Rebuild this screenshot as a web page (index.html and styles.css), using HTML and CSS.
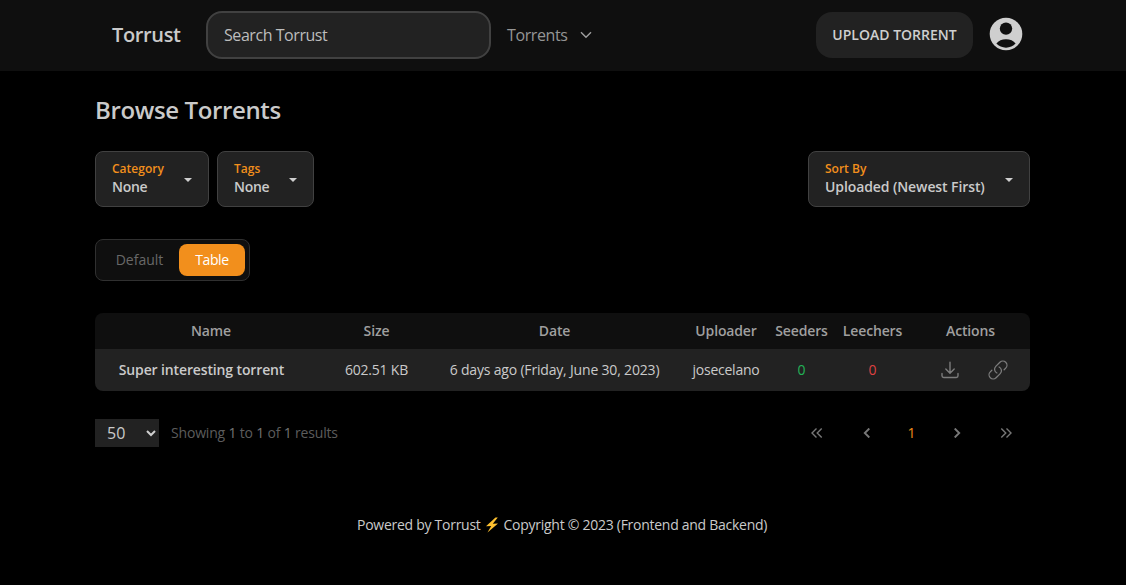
FILE: index.html
```html
<!DOCTYPE html>
<html lang="en">
<head>
<meta charset="utf-8">
<title>Torrust</title>
<link rel="stylesheet" href="styles.css">
</head>
<body>
<header class="navbar">
  <a class="brand"><span class="t-brand">Torrust</span></a>
  <div class="search"><span class="t-search">Search Torrust</span></div>
  <nav class="nav-menu">
    <span class="t-nav">Torrents</span>
    <svg class="chevron" viewBox="0 0 12 8" width="12" height="8"><path d="M1 1.2 6 6.2 11 1.2"/></svg>
  </nav>
  <button class="upload"><span class="t-upload">UPLOAD TORRENT</span></button>
  <svg class="avatar" viewBox="0 0 34 34" width="34" height="34">
    <circle class="avatar-disc" cx="17" cy="17" r="16.3"/>
    <circle class="avatar-cut" cx="17" cy="11.6" r="6.2"/>
    <path class="avatar-cut" d="M7.4 26.6C9.400 23.700 13 22.300 17 22.300S24.600 23.700 26.600 26.600C24.200 29.300 20.800 30.700 17 30.700S9.800 29.300 7.400 26.600Z"/>
  </svg>
</header>
<main class="content">
  <h1 class="title"><span class="t-title">Browse Torrents</span></h1>
  <div class="filters">
    <div class="filter category">
      <div><div class="label"><span class="t-cat">Category</span></div><div class="value"><span class="t-none">None</span></div></div>
      <i class="caret"></i>
    </div>
    <div class="filter tags">
      <div><div class="label"><span class="t-tags">Tags</span></div><div class="value"><span class="t-none">None</span></div></div>
      <i class="caret"></i>
    </div>
    <div class="filter sort">
      <div><div class="label"><span class="t-sort">Sort By</span></div><div class="value"><span class="t-order">Uploaded (Newest First)</span></div></div>
      <i class="caret"></i>
    </div>
  </div>
  <div class="tabs">
    <span class="tab"><span class="t-default">Default</span></span>
    <span class="tab active"><span class="t-table">Table</span></span>
  </div>
  <table class="torrents">
    <colgroup><col class="c-name"><col class="c-size"><col class="c-date"><col class="c-user"><col class="c-seed"><col class="c-leech"><col class="c-act"></colgroup>
    <thead><tr>
      <th><span class="t-head">Name</span></th><th><span class="t-head">Size</span></th><th><span class="t-head">Date</span></th><th><span class="t-head">Uploader</span></th><th><span class="t-head">Seeders</span></th><th><span class="t-head">Leechers</span></th><th><span class="t-head">Actions</span></th>
    </tr></thead>
    <tbody><tr>
      <td class="name"><span class="t-name">Super interesting torrent</span></td>
      <td><span class="t-size">602.51 KB</span></td>
      <td><span class="t-date">6 days ago (Friday, June 30, 2023)</span></td>
      <td><span class="t-user">josecelano</span></td>
      <td class="seed">0</td>
      <td class="leech">0</td>
      <td><div class="actions">
        <svg viewBox="0 0 18 18" width="18" height="18"><path d="M9 1.200V12M4.800 8 9 12.200 13.200 8M1 12.500V14.800Q1 16.500 2.700 16.500H15.300Q17 16.500 17 14.800V12.500"/></svg>
        <svg viewBox="0 0 24 24" width="22" height="22"><path d="M13.190 8.688a4.500 4.500 0 0 1 1.242 7.244l-4.500 4.500a4.500 4.500 0 0 1-6.364-6.364l1.757-1.757m13.350-.622 1.757-1.757a4.500 4.500 0 0 0-6.364-6.364l-4.500 4.500a4.500 4.500 0 0 0 1.242 7.244"/></svg>
      </div></td>
    </tr></tbody>
  </table>
  <div class="footer-row">
    <div class="page-size"><span class="t-fifty">50</span><svg viewBox="0 0 10 7" width="10" height="7"><path d="M1 1 5 5 9 1"/></svg></div>
    <div class="results"><span class="t-results">Showing <b>1</b> to <b>1</b> of <b>1</b> results</span></div>
    <div class="pager">
      <svg class="thin" viewBox="0 0 12 10" width="12" height="10"><path d="M5.500.5 1 5 5.500 9.500M10.700.5 6.200 5 10.700 9.500"/></svg>
      <svg viewBox="0 0 12 10" width="12" height="10"><path d="M8.300.5 3.800 5 8.300 9.500"/></svg>
      <span class="current">1</span>
      <svg viewBox="0 0 12 10" width="12" height="10"><path d="M3.700.5 8.200 5 3.700 9.500"/></svg>
      <svg class="thin" viewBox="0 0 12 10" width="12" height="10"><path d="M1.300.5 5.800 5 1.300 9.500M6.500.5 11 5 6.500 9.500"/></svg>
    </div>
  </div>
</main>
<footer class="credits">
  <span class="t-powered">Powered by Torrust</span>
  <svg class="bolt" viewBox="0 0 14 16" width="14" height="16"><path d="M10.500.5 1 9.200 6.200 9 2.500 15.500 13 6.500 7.800 6.700 12.800.5Z"/></svg>
  <span class="t-copy">Copyright © 2023 (Frontend and Backend)</span>
</footer>
</body>
</html>
```
FILE: styles.css
```css
* { box-sizing: border-box; }
body {
  margin: 0;
  min-height: 585px;
  background: #000;
  color: #cacaca;
  font: 14px/20px "Open Sans", "Noto Sans", sans-serif;
}
span { white-space: nowrap; }
svg { display: block; fill: none; flex: none; }

.t-brand { letter-spacing: -0.35px; }
.t-search { letter-spacing: -0.44px; }
.t-nav { letter-spacing: -0.4px; }
.t-title { letter-spacing: -0.37px; }
.t-none { letter-spacing: -0.3px; }
.t-order { letter-spacing: -0.1px; }
.t-table { letter-spacing: -0.4px; }
.t-head { letter-spacing: -0.15px; }
.t-name { letter-spacing: -0.13px; }
.t-size { letter-spacing: -0.2px; }
.t-date { letter-spacing: -0.18px; }
.t-user { letter-spacing: -0.25px; }
.t-results { letter-spacing: -0.18px; }
.t-powered { letter-spacing: -0.27px; }
.t-copy { letter-spacing: -0.27px; }

.navbar {
  display: flex;
  align-items: center;
  height: 71px;
  padding: 0 103px 2px 112px;
  background: #0f0f0f;
}
.brand { width: 94px; font-size: 20px; font-weight: 600; }
.search {
  display: flex;
  align-items: center;
  width: 285px;
  height: 48px;
  padding-left: 16px;
  border: 2px solid #414141;
  border-radius: 16px;
  background: #222;
  color: #bdbdbd;
  font-size: 16px;
}
.nav-menu {
  display: flex;
  align-items: center;
  justify-content: space-between;
  width: 85px;
  margin-left: 16px;
  color: #959595;
  font-size: 16px;
}
.chevron path { stroke: #9f9f9f; stroke-width: 1.4; }
.upload {
  width: 157px;
  height: 46px;
  margin: 0 16px 0 auto;
  padding: 0;
  border: 0;
  border-radius: 16px;
  background: #222;
  color: #cfcfcf;
  font: 600 14px/20px "Open Sans", sans-serif;
}
.avatar { margin-bottom: 2px; }
.avatar-disc { fill: #cfcfcf; }
.avatar-cut { fill: #0f0f0f; }

.content { width: 935px; margin-left: 95px; }
.title { margin: 0; padding-top: 23px; font-size: 24px; line-height: 32px; font-weight: 600; }
.filters { display: flex; gap: 8px; margin-top: 25px; }
.filter {
  display: flex;
  align-items: center;
  justify-content: space-between;
  height: 56px;
  padding: 0 16px;
  border: 1px solid #414141;
  border-radius: 8px;
  background: #222;
  font-weight: 600;
}
.category { width: 114px; }
.tags { width: 97px; }
.sort { width: 222px; margin-left: auto; }
.label { color: #f28f1c; font-size: 12px; line-height: 16px; font-weight: 600; }
.value { line-height: 20px; }
.caret {
  border: 4px solid transparent;
  border-top-color: #cfcfcf;
  border-bottom: 0;
  margin-top: 1px;
}
.tabs {
  display: flex;
  width: 155px;
  height: 42px;
  margin-top: 32px;
  padding: 4px;
  border: 1px solid #303030;
  border-radius: 8px;
  background: #0f0f0f;
}
.tab { width: 79px; line-height: 32px; text-align: center; color: #686868; }
.tab.active { width: 66px; border-radius: 8px; background: #f28f1c; color: #fff; }

.torrents {
  width: 935px;
  margin-top: 32px;
  border-collapse: collapse;
  table-layout: fixed;
  border-radius: 8px;
  overflow: hidden;
}
.c-name { width: 232px; }
.c-size { width: 99px; }
.c-date { width: 257px; }
.c-user { width: 86px; }
.c-seed { width: 65px; }
.c-leech { width: 77px; }
.c-act { width: 119px; }
th, td { padding: 0; text-align: center; }
th { height: 36px; background: #0f0f0f; color: #9f9f9f; font-weight: 600; }
td { height: 42px; background: #222; }
.name { padding-right: 19px; font-weight: 600; }
.seed { color: #22b357; }
.leech { color: #df4141; }
.actions { display: flex; align-items: center; justify-content: space-between; padding: 0 21px 0 30px; }
.actions path { stroke: #7c7c7c; stroke-width: 1.4; stroke-linecap: round; stroke-linejoin: round; }

.footer-row { display: flex; align-items: center; height: 28px; margin-top: 28px; }
.page-size {
  display: flex;
  align-items: center;
  justify-content: space-between;
  width: 64px;
  height: 28px;
  padding: 0 3px 0 12px;
  background: #222;
  font-size: 16px;
}
.page-size path { stroke: #cfcfcf; stroke-width: 2; }
.results { margin-left: 12px; color: #5c5c5c; }
.results b { color: #747474; font-weight: 400; }
.pager { display: flex; align-items: center; gap: 37.5px; margin: 0 18px 0 auto; }
.pager path { stroke: #777; stroke-width: 1.9; }
.pager .thin path { stroke-width: 1.4; }
.current { width: 8px; margin: 0 -2.5px; color: #f28f1c; }

.credits { display: flex; align-items: center; height: 20px; margin: 68px 0 0 357px; }
.bolt { margin: 0 5px 0 4px; }
.bolt path { fill: #fdc02f; }
```
